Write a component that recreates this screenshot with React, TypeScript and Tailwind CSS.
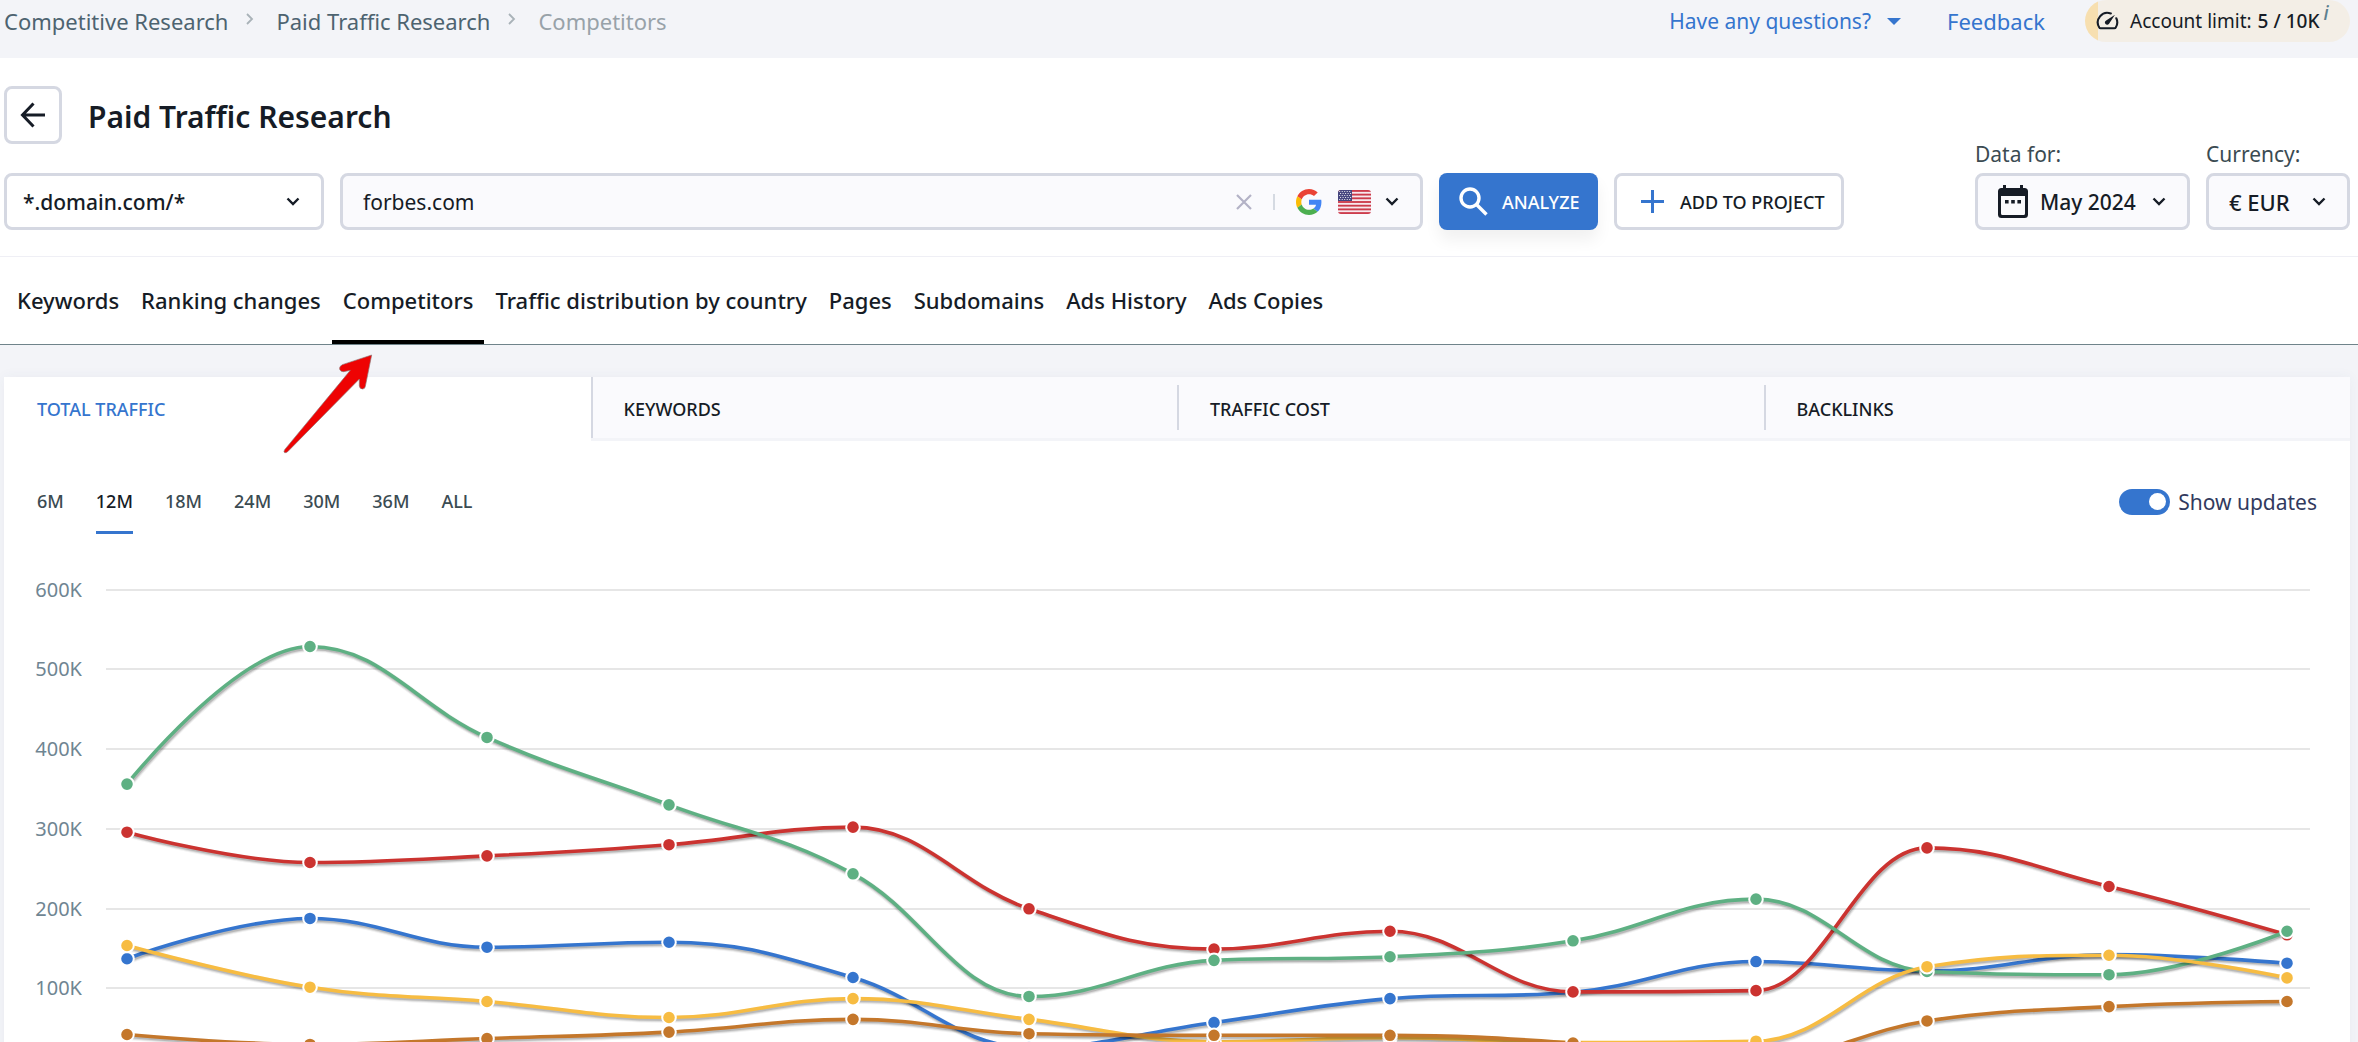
import { useState } from 'react';
import type { ReactNode } from 'react';

const navTabs = [
  'Keywords',
  'Ranking changes',
  'Competitors',
  'Traffic distribution by country',
  'Pages',
  'Subdomains',
  'Ads History',
  'Ads Copies',
];

const metricTabs = ['TOTAL TRAFFIC', 'KEYWORDS', 'TRAFFIC COST', 'BACKLINKS'];

const ranges = ['6M', '12M', '18M', '24M', '30M', '36M', 'ALL'];

// monthly traffic in thousands
const series = [
  { name: 'blue', color: '#3575ce', data: [137, 187.5, 151.5, 157.7, 113.5, 25.7, 57, 87, 95, 133.5, 121.5, 142.3, 131.4] },
  { name: 'red', color: '#cb3330', data: [295.7, 257.7, 266, 280, 302, 199.6, 149, 171.5, 95.5, 97, 276, 227.6, 167] },
  { name: 'green', color: '#5eb083', data: [356, 528.5, 414.5, 330, 243.5, 89.7, 135, 139.5, 159.5, 211.7, 121, 117, 171.5] },
  { name: 'yellow', color: '#f7bc42', data: [153.6, 101.3, 83.4, 63.3, 87, 61, 33, 38, 32, 33.6, 127, 141.4, 113] },
  { name: 'brown', color: '#c4772b', data: [42, 29.5, 37, 45, 61, 43, 41, 41, 31.3, 10, 59, 77, 83.4] },
];

// x of every month inside the chart, months differ in length
const xs = [123, 306, 483, 665, 849, 1025, 1210, 1386, 1569, 1752, 1923, 2105, 2283];
const yOf = (v: number) => 527 - v * 0.7975;

function spline(data: number[]) {
  const pts = data.map((v, i) => [xs[i], yOf(v)]);
  let d = `M${pts[0][0]} ${pts[0][1]}`;
  let prevRight = pts[0];
  for (let i = 1; i < pts.length; i++) {
    const [x, y] = pts[i];
    let left = [x, y];
    let right = [x, y];
    const last = pts[i - 1];
    const next = pts[i + 1];
    if (next) {
      const lx = (1.5 * x + last[0]) / 2.5;
      let ly = (1.5 * y + last[1]) / 2.5;
      const rx = (1.5 * x + next[0]) / 2.5;
      let ry = (1.5 * y + next[1]) / 2.5;
      const fix = ((ry - ly) * (rx - x)) / (rx - lx) + y - ry;
      ly += fix;
      ry += fix;
      // keep the curve from overshooting its neighbours
      if (ly > last[1] && ly > y) {
        ly = Math.max(last[1], y);
        ry = 2 * y - ly;
      } else if (ly < last[1] && ly < y) {
        ly = Math.min(last[1], y);
        ry = 2 * y - ly;
      }
      if (ry > next[1] && ry > y) {
        ry = Math.max(next[1], y);
        ly = 2 * y - ry;
      } else if (ry < next[1] && ry < y) {
        ry = Math.min(next[1], y);
        ly = 2 * y - ry;
      }
      left = [lx, ly];
      right = [rx, ry];
    }
    d += `C${prevRight[0]} ${prevRight[1]} ${left[0]} ${left[1]} ${x} ${y}`;
    prevRight = right;
  }
  return d;
}

function TrafficChart() {
  return (
    <svg viewBox="0 0 2346 520" className="mt-[7px] block w-full" role="img" aria-label="Total traffic">
      {[600, 500, 400, 300, 200, 100].map((v) => (
        <g key={v}>
          <rect x="102" y={Math.round(yOf(v)) - 1} width="2204" height="2" fill="#e6e6e6" />
          <text x="78" y={Math.round(yOf(v)) + 7} textAnchor="end" className="fill-[#6f8592] text-[20px]">
            {v}K
          </text>
        </g>
      ))}
      {series.map((s) => {
        const d = spline(s.data);
        return (
          <g key={s.name} fill="none">
            <g stroke="#000" transform="translate(1 2)">
              <path d={d} strokeWidth="7" opacity="0.05" />
              <path d={d} strokeWidth="5" opacity="0.1" />
              <path d={d} strokeWidth="3" opacity="0.15" />
            </g>
            <path d={d} stroke={s.color} strokeWidth="3.6" strokeLinecap="round" />
            {s.data.map((v, i) => (
              <circle key={i} cx={xs[i]} cy={yOf(v)} r="6.8" fill={s.color} stroke="#fff" strokeWidth="2" />
            ))}
          </g>
        );
      })}
    </svg>
  );
}

function ChevronDown({ className = '' }: { className?: string }) {
  return (
    <svg viewBox="0 0 14 9" className={`w-[14px] shrink-0 ${className}`} fill="none" stroke="#161c26" strokeWidth="2.4">
      <path d="M1.5 1.5 7 7l5.5-5.5" />
    </svg>
  );
}

function Crumb({ children }: { children: ReactNode }) {
  return (
    <>
      <a href="#" className="text-[#4d6370]">{children}</a>
      <svg viewBox="0 0 8 12" className="mb-1 ml-[18px] mr-[22px] w-2" fill="none" stroke="#a9b2b8" strokeWidth="1.8">
        <path d="m1 1 5 5-5 5" />
      </svg>
    </>
  );
}

function GoogleIcon() {
  return (
    <svg viewBox="0 0 48 48" className="w-[26px]">
      <path fill="#EA4335" d="M24 9.5c3.54 0 6.71 1.22 9.21 3.6l6.85-6.85C35.9 2.38 30.47 0 24 0 14.62 0 6.51 5.38 2.56 13.22l7.98 6.19C12.43 13.72 17.74 9.5 24 9.5z" />
      <path fill="#4285F4" d="M46.98 24.55c0-1.57-.15-3.09-.38-4.55H24v9.02h12.94c-.58 2.96-2.26 5.48-4.78 7.18l7.73 6c4.51-4.18 7.09-10.36 7.09-17.65z" />
      <path fill="#FBBC05" d="M10.53 28.59c-.48-1.45-.76-2.99-.76-4.59s.27-3.14.76-4.59l-7.98-6.19C.92 16.46 0 20.12 0 24c0 3.88.92 7.54 2.56 10.78l7.97-6.19z" />
      <path fill="#4CAF50" d="M24 48c6.48 0 11.93-2.13 15.89-5.81l-7.73-6c-2.15 1.45-4.92 2.3-8.16 2.3-6.26 0-11.57-4.22-13.47-9.91l-7.98 6.19C6.51 42.62 14.62 48 24 48z" />
    </svg>
  );
}

function UsFlag() {
  return (
    <svg viewBox="0 0 33 24" className="w-[33px] overflow-hidden rounded-[3px]">
      <rect width="33" height="24" fill="#f7e9ee" />
      {[0, 1, 2, 3, 4, 5, 6].map((i) => (
        <rect key={i} y={i * 3.69} width="33" height="1.85" fill="#cc3b4b" />
      ))}
      <rect width="14" height="11" fill="#46467f" />
      {[0, 1, 2, 3, 4].map((r) =>
        [0, 1, 2, 3, 4].map((c) => (
          <circle key={`${r}-${c}`} cx={1.7 + c * 2.5 + (r % 2) * 0.9} cy={1.5 + r * 2} r="0.6" fill="#fff" />
        )),
      )}
    </svg>
  );
}

export default function App() {
  const [domain, setDomain] = useState('forbes.com');
  const [updates, setUpdates] = useState(true);

  return (
    <div className="relative h-screen overflow-hidden bg-[#f3f4f8] font-['Noto_Sans',sans-serif] text-[21px] leading-[28px] text-[#161c26]">
      {/* Breadcrumbs */}
      <header className="flex h-[58px] items-start justify-between bg-[#f3f4f8] pl-1 pr-2">
        <nav className="flex h-[42px] items-center text-[22px]" aria-label="Breadcrumb">
          <Crumb>Competitive Research</Crumb>
          <Crumb>Paid Traffic Research</Crumb>
          <span className="text-[#98a2a9]">Competitors</span>
        </nav>
        <div className="flex h-[42px] items-center">
          <button className="flex items-center gap-4 text-[#3575ce]">
            Have any questions?
            <svg viewBox="0 0 14 7" className="w-[14px]" fill="#3575ce">
              <path d="M0 0h14L7 7z" />
            </svg>
          </button>
          <a href="#" className="ml-[46px] text-[22px] text-[#3575ce]">Feedback</a>
          <div className="ml-10 flex h-[42px] w-[265px] items-center overflow-hidden rounded-full bg-[linear-gradient(90deg,#f7dfb0_13px,#f3eee6_13px)] pl-[11px] text-[19px]">
            <svg viewBox="0 0 24 20" className="mr-[11px] w-[23px]" fill="none" stroke="#161c26" strokeWidth="2.2">
              <path d="M15.5 2.6A10 10 0 0 0 3.4 17.2q.4.8 1.4.8h14.4q1 0 1.4-.8a10 10 0 0 0 .6-9.6" strokeLinecap="round" />
              <path d="M19.8 4 13.8 13a2.4 2.4 0 1 1-3.2-3.2z" fill="#161c26" stroke="none" />
            </svg>
            Account limit:
            <span className="ml-[6px] font-medium">5 / 10K</span>
            <i className="ml-1 self-start text-[19px] font-medium leading-[26px] text-[#5d7f8f]">i</i>
          </div>
        </div>
      </header>

      {/* Search form */}
      <section className="bg-white pb-[26px] pl-1 pr-2 pt-7">
        <div className="flex items-center gap-[26px]">
          <button aria-label="Back" className="flex size-[58px] items-center justify-center rounded-lg border-3 border-[#d5d8e2]">
            <svg viewBox="0 0 26 26" className="w-[26px]" fill="none" stroke="#161c26" strokeWidth="3">
              <path d="M25 13H3M13.5 1.5 2.5 13l11 11.5" />
            </svg>
          </button>
          <h1 className="pt-[3px] text-[30px] font-semibold leading-[40px]">Paid Traffic Research</h1>
        </div>

        <div className="flex items-end gap-4">
          <div className="relative w-[320px]">
            <select aria-label="Search scope" className="block h-[57px] w-full appearance-none rounded-lg border-3 border-[#d5d8e2] bg-white pl-4 font-medium">
              <option>*.domain.com/*</option>
            </select>
            <ChevronDown className="pointer-events-none absolute right-6 top-6" />
          </div>
          <div className="flex h-[57px] flex-1 items-center rounded-lg border-3 border-[#d5d8e2] bg-[#fafafd] pl-5 pr-[21px]">
            <input
              aria-label="Domain"
              value={domain}
              onChange={(e) => setDomain(e.target.value)}
              className="min-w-0 flex-1 bg-transparent outline-none"
            />
            <button aria-label="Clear" onClick={() => setDomain('')} className="mr-[21px]">
              <svg viewBox="0 0 16 16" className="w-4" fill="none" stroke="#b3b2c6" strokeWidth="2.2">
                <path d="m1 1 14 14M15 1 1 15" />
              </svg>
            </button>
            <span className="mr-[21px] h-4 w-[2px] bg-[#d5dae2]" />
            <button aria-label="Search engine" className="flex items-center">
              <GoogleIcon />
              <span className="ml-4 mr-[14px]"><UsFlag /></span>
              <ChevronDown />
            </button>
          </div>
          <button className="flex h-[57px] w-[159px] items-center gap-[14px] rounded-lg bg-[#3575ce] pl-5 text-[18px] font-medium text-white shadow-[0_10px_16px_rgba(0,0,0,0.06)]">
            <svg viewBox="0 0 29 29" className="w-[29px]" fill="none" stroke="#fff" strokeWidth="3.4">
              <circle cx="11" cy="11" r="9" />
              <path d="m17.5 17.5 10 10" />
            </svg>
            ANALYZE
          </button>
          <button className="flex h-[57px] w-[230px] items-center gap-4 rounded-lg border-3 border-[#d5d8e2] bg-white pl-6 text-[18px] font-medium">
            <svg viewBox="0 0 23 23" className="w-[23px]" fill="none" stroke="#3575ce" strokeWidth="3">
              <path d="M11.5 0v23M0 11.5h23" />
            </svg>
            ADD TO PROJECT
          </button>

          <div className="ml-[115px] w-[215px]">
            <label htmlFor="period" className="mb-2 block leading-[21px] text-[#3b4b52]">Data for:</label>
            <button id="period" className="flex h-[57px] w-full items-center rounded-lg border-3 border-[#d5d8e2] bg-[#fafafd] pl-5 font-medium">
              <svg viewBox="0 0 30 33" className="mr-3 w-[30px]" fill="#161c26">
                <path fillRule="evenodd" d="M5 0h3v3h14V0h3v3h1.500Q30 3 30 6.500v23Q30 33 26.500 33h-23Q0 33 0 29.500v-23Q0 3 3.500 3H5zM3 11v17.500Q3 30 4.500 30h21q1.500 0 1.500-1.500V11z" />
                <path d="M7 15h3.600v3.600H7zm6.200 0h3.600v3.600h-3.600zm6.200 0H23v3.600h-3.600z" />
              </svg>
              May 2024
              <ChevronDown className="ml-4" />
            </button>
          </div>
          <div className="w-[144px]">
            <label htmlFor="currency" className="mb-2 block leading-[21px] text-[#3b4b52]">Currency:</label>
            <div className="relative">
              <select id="currency" className="block h-[57px] w-full appearance-none rounded-lg border-3 border-[#d5d8e2] bg-[#fafafd] pl-5 text-[22px] font-medium">
                <option>€ EUR</option>
              </select>
              <ChevronDown className="pointer-events-none absolute right-6 top-6" />
            </div>
          </div>
        </div>
      </section>

      {/* Report tabs */}
      <nav className="flex h-[89px] border-b border-t border-b-[#6f838a] border-t-[#efeff5] bg-white pl-[6px] text-[22px] font-medium">
        {navTabs.map((tab) => (
          <a
            key={tab}
            href="#"
            className={`flex items-center border-b-4 px-[11px] pt-[3px] ${tab === 'Competitors' ? 'border-black' : 'border-transparent'}`}
          >
            {tab}
          </a>
        ))}
      </nav>

      {/* Chart card */}
      <main className="ml-1 mr-2 mt-8 bg-white shadow-[0_0_12px_rgba(60,70,110,0.05)]">
        <div className="grid grid-cols-4 text-[18px] font-medium">
          {metricTabs.map((tab, i) => (
            <button
              key={tab}
              className={`flex h-16 items-center border-b-3 text-left ${i === 0 ? 'border-transparent pl-[33px] text-[#3575ce]' : 'border-[#f3f4f8] bg-[#fafafd]'}`}
            >
              {i > 0 && <span className={`mr-[31px] w-[2px] bg-[#d5d8e2] ${i === 1 ? 'h-full' : 'h-[45px]'}`} />}
              <span className="pt-[2px]">{tab}</span>
            </button>
          ))}
        </div>

        <div className="flex items-center justify-between pl-[33px] pr-[33px] pt-[30px]">
          <div className="flex gap-8 text-[18px] font-medium text-[#3b4b52]">
            {ranges.map((r) => (
              <button
                key={r}
                className={`flex h-[63px] items-center border-b-3 ${r === '12M' ? 'border-[#3575ce] text-[#161c26]' : 'border-transparent'}`}
              >
                {r}
              </button>
            ))}
          </div>
          <label className="flex cursor-pointer items-center gap-2 pb-[2px] text-[#323a5e]">
            <input type="checkbox" checked={updates} onChange={() => setUpdates(!updates)} className="peer sr-only" />
            <span className="flex h-[26px] w-[51px] items-center justify-start rounded-full bg-[#b9bfca] px-1 peer-checked:justify-end peer-checked:bg-[#3575ce]">
              <span className="size-[17px] rounded-full bg-white" />
            </span>
            Show updates
          </label>
        </div>

        <TrafficChart />
      </main>

      {/* Pointer to the active tab */}
      <svg viewBox="0 0 390 390" className="absolute left-[270px] top-[340px] w-[130px]" aria-hidden="true">
        <path
          d="M305 45 217 74Q207 79 209 88q3 8 12 7l20-4L44 329q-4 6 0 9 4 1 9-3L268 117v20q1 10 10 10 7 0 8-8z"
          fill="#ee0303"
          stroke="#8d7474"
          strokeWidth="2"
        />
      </svg>
    </div>
  );
}
